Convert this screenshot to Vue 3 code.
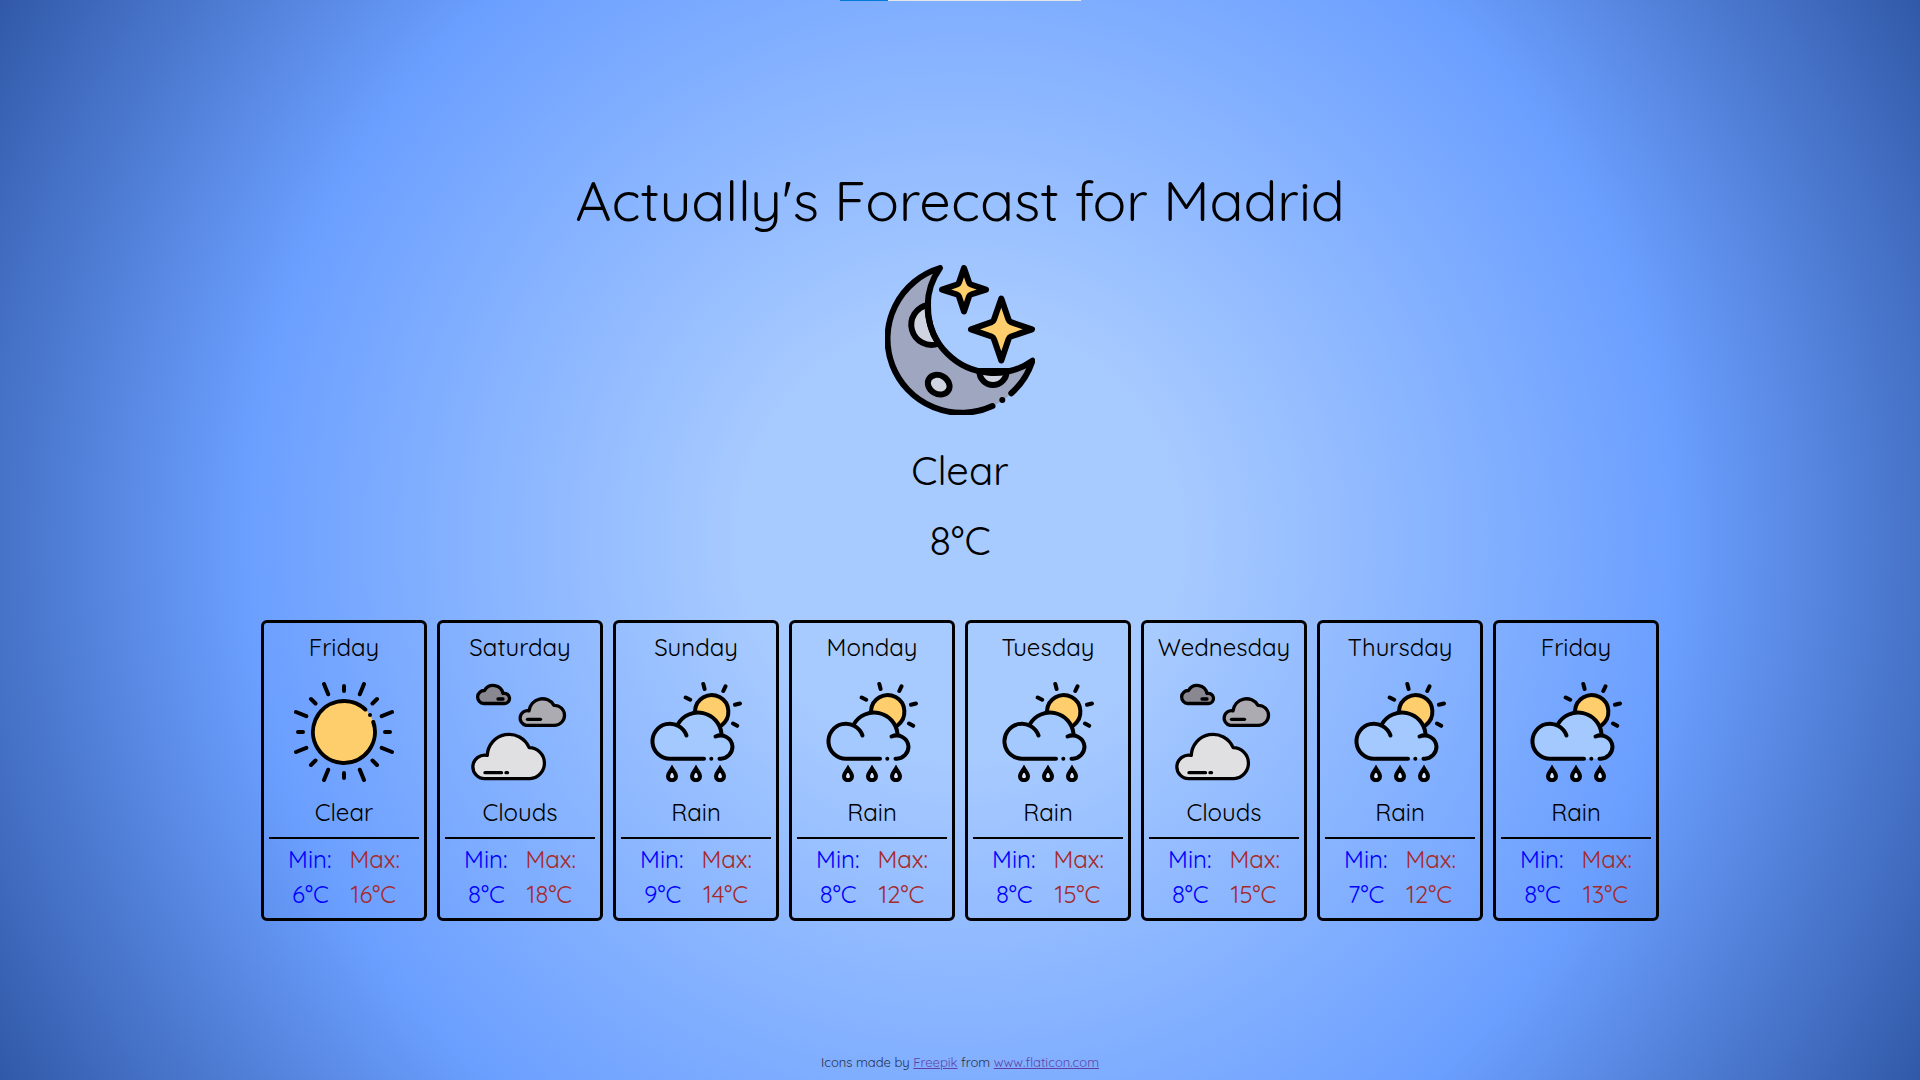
<script setup>
const city = 'Madrid'
const current = { condition: 'Clear', temperature: 8 }

const days = [
  { name: 'Friday', condition: 'Clear', min: 6, max: 16 },
  { name: 'Saturday', condition: 'Clouds', min: 8, max: 18 },
  { name: 'Sunday', condition: 'Rain', min: 9, max: 14 },
  { name: 'Monday', condition: 'Rain', min: 8, max: 12 },
  { name: 'Tuesday', condition: 'Rain', min: 8, max: 15 },
  { name: 'Wednesday', condition: 'Clouds', min: 8, max: 15 },
  { name: 'Thursday', condition: 'Rain', min: 7, max: 12 },
  { name: 'Friday', condition: 'Rain', min: 8, max: 13 },
]
</script>

<template>
  <div class="page">
    <progress class="loader" value="20" max="100" aria-label="Loading forecast"></progress>

    <main class="forecast">
      <h1 class="title">Actually's Forecast for {{ city }}</h1>

      <section class="current">
        <svg class="current-icon" viewBox="0 0 150 150" aria-hidden="true">
          <path fill="#9fa6c0" d="M55 3A74 74 0 1 0 147.5 95.7A66.400 66.400 0 0 1 55 3Z" />
          <g fill="#d0d4e0" stroke="#000" stroke-width="6">
            <path d="M43 40A20.050 20.050 0 1 0 53.500 78.500A67 67 0 0 1 43 40Z" />
            <path d="M94.300 106A13.700 14 0 0 0 121.700 106Z" />
            <ellipse cx="53.700" cy="119.700" rx="11.300" ry="9.300" transform="rotate(30 53.700 119.700)" />
          </g>
          <g fill="none" stroke="#000" stroke-width="6" stroke-linecap="round" stroke-linejoin="round">
            <path d="M107.500 141A74 74 0 1 1 55 3A66.400 66.400 0 0 0 147.500 95.700A74 74 0 0 1 126.300 128.300" />
            <path fill="#ffce6c" d="M79 3L84 17.500Q84.500 19 86 19.500L101 24.700L86 29.500Q84.500 30 84 31.500L79 46.500L74 31.500Q73.500 30 72 29.500L57 24.700L72 19.500Q73.500 19 74 17.500Z" />
            <path fill="#ffce6c" d="M116.300 33.500L123.500 54.500Q124.200 56.500 126 57.200L147 64.300L126 71.500Q124.200 72.200 123.500 74.200L116.300 95.500L109 74.200Q108.300 72.200 106.500 71.500L86 64.300L106.500 57.200Q108.300 56.500 109 54.500Z" />
          </g>
          <circle cx="117.300" cy="135" r="3" />
        </svg>
        <p class="current-text">{{ current.condition }}</p>
        <p class="current-text">{{ current.temperature }}°C</p>
      </section>

      <section class="days">
        <article v-for="(day, index) in days" :key="index" class="day">
          <h2 class="day-text">{{ day.name }}</h2>

          <svg v-if="day.condition === 'Clear'" class="day-icon" viewBox="0 0 100 100" aria-hidden="true">
            <circle cx="50" cy="50" r="31" fill="#ffce6c" />
            <g fill="none" stroke="#000" stroke-width="4" stroke-linecap="round">
              <path d="M71.300 27.500A31 31 0 1 0 79.300 40" />
              <path d="M50 4v5M50 91v5M4 50h5M91 50h5M17 17l4.500 4.500M83 17l-4.500 4.500M17 83l4.500-4.500M83 83l-4.500-4.500" />
              <path d="M30 2l4.200 10.300M70 2l-4.200 10.300M30 98l4.200-10.300M70 98l-4.200-10.300M2 30l10.300 4.200M2 70l10.300-4.200M98 30l-10.300 4.200M98 70l-10.300-4.200" />
            </g>
            <circle cx="76" cy="33" r="2" />
          </svg>

          <svg v-else-if="day.condition === 'Clouds'" class="day-icon" viewBox="0 0 100 100" aria-hidden="true">
            <g stroke="#000" stroke-width="3.300" stroke-linecap="round" stroke-linejoin="round">
              <path fill="#898890" d="M13.800 21.500A6.500 6.500 0 1 1 14.500 8.500A10 10 0 0 1 33 11.500A5.100 5.100 0 1 1 34.500 21.500Z" />
              <path d="M28 17h5" />
              <path fill="#acabb1" d="M56 43.300A7.400 7.400 0 0 1 59 28.800A13.500 13.500 0 0 1 84 23.300A10 10 0 0 1 85 43.300Z" />
              <path d="M57.500 37.300h13" />
              <path fill="#e0e0e3" d="M15 96.700A11.800 11.800 0 1 1 17.300 73.400A21.800 21.800 0 0 1 59.200 65.700A15.520 15.520 0 0 1 60 96.700Z" />
              <path d="M15 90.700h16.500M36 90.700h1.500" />
            </g>
          </svg>

          <svg v-else class="day-icon" viewBox="0 0 100 100" aria-hidden="true">
            <circle cx="65.500" cy="30" r="16.700" fill="#ffce6c" />
            <path fill="#a4c9ff" d="M24 76.700A17.500 17.500 0 1 1 32 43.500A23.500 23.500 0 0 1 75.500 52.500A12 12 0 0 1 75 76.700Z" />
            <g fill="none" stroke="#000" stroke-width="4" stroke-linecap="round">
              <path d="M49 29A16.700 16.700 0 1 1 75.500 43.300" />
              <path d="M32 42A23.500 23.500 0 0 1 75.500 51.500" />
              <path d="M58 76.700H24A17.500 17.500 0 1 1 40.500 53.500" />
              <path d="M69.500 54.500A12.100 12.100 0 0 1 86.500 64.600A12.100 12.100 0 0 1 75 76.700H73.500" />
              <path d="M57.300 2l1.300 5M79.500 4.300l-2.200 4.700M39.700 15.500l4.500 2.200M89 22.800l5-1.300M87 41.500l4.200 2.300" />
              <path fill="#dbe9ff" d="M26 86.500C24.500 89 22 91.500 22 94.200a4 4 0 0 0 8 0C30 91.500 27.500 89 26 86.500ZM50 86.500C48.500 89 46 91.500 46 94.200a4 4 0 0 0 8 0C54 91.500 51.500 89 50 86.500ZM74 86.500C72.500 89 70 91.500 70 94.200a4 4 0 0 0 8 0C78 91.500 75.500 89 74 86.500Z" />
            </g>
            <circle cx="65.300" cy="76.700" r="2" />
          </svg>

          <p class="day-text">{{ day.condition }}</p>
          <div class="range">
            <div class="range-row"><span class="min">Min:</span><span class="max">Max:</span></div>
            <div class="range-row values"><span class="min">{{ day.min }}°C</span><span class="max">{{ day.max }}°C</span></div>
          </div>
        </article>
      </section>
    </main>

    <footer class="credits">
      Icons made by <a href="https://www.freepik.com">Freepik</a> from
      <a href="https://www.flaticon.com/">www.flaticon.com</a>
    </footer>
  </div>
</template>

<style>
body {
  margin: 0;
}
</style>

<style scoped>
.page {
  display: flex;
  flex-direction: column;
  align-items: center;
  box-sizing: border-box;
  min-height: 100vh;
  padding-bottom: 10px;
  background: radial-gradient(circle, #a7caff 20%, #6b9fff 65%, #3159a8 100%);
  color: #000;
  font-family: Quicksand, Lato, sans-serif;
  font-weight: 400;
  line-height: 1.25;
}

.loader {
  appearance: none;
  display: block;
  width: 241px;
  height: 1px;
  border: 0;
  background: #e6e6e6;
}

.loader::-webkit-progress-bar {
  background: #e6e6e6;
}

.loader::-webkit-progress-value {
  background: #0078d7;
}

.forecast {
  display: flex;
  flex: 1;
  flex-direction: column;
  align-items: center;
  justify-content: center;
}

.title {
  margin: 32px 0 30px;
  font-size: 56px;
  font-weight: inherit;
}

.current {
  display: flex;
  flex-direction: column;
  align-items: center;
  gap: 20px;
  margin-bottom: 55px;
}

.current-icon {
  width: 150px;
  height: 150px;
  margin-bottom: 10px;
}

.current-text {
  margin: 0;
  font-size: 40px;
}

.days {
  display: flex;
  flex-wrap: wrap;
  justify-content: center;
  gap: 10px;
}

.day {
  display: flex;
  flex-direction: column;
  align-items: center;
  box-sizing: border-box;
  width: 166px;
  padding: 9px 5px;
  border: 3px solid #000;
  border-radius: 6px;
}

.day-text {
  margin: 0;
  font-size: 24px;
  font-weight: inherit;
}

.day-icon {
  width: 100px;
  height: 100px;
  margin: 20px 0 15px;
}

.range {
  display: flex;
  flex-direction: column;
  align-self: stretch;
  gap: 5px;
  margin-top: 10px;
  padding-top: 5px;
  border-top: 2px solid #000;
  font-size: 24px;
}

.range-row {
  display: flex;
  justify-content: center;
  gap: 18px;
}

.values {
  gap: 22px;
}

.min {
  color: blue;
}

.max {
  color: brown;
}

.credits {
  font-size: 13px;
  opacity: 0.75;
}

.credits a {
  color: #551a8b;
}
</style>
